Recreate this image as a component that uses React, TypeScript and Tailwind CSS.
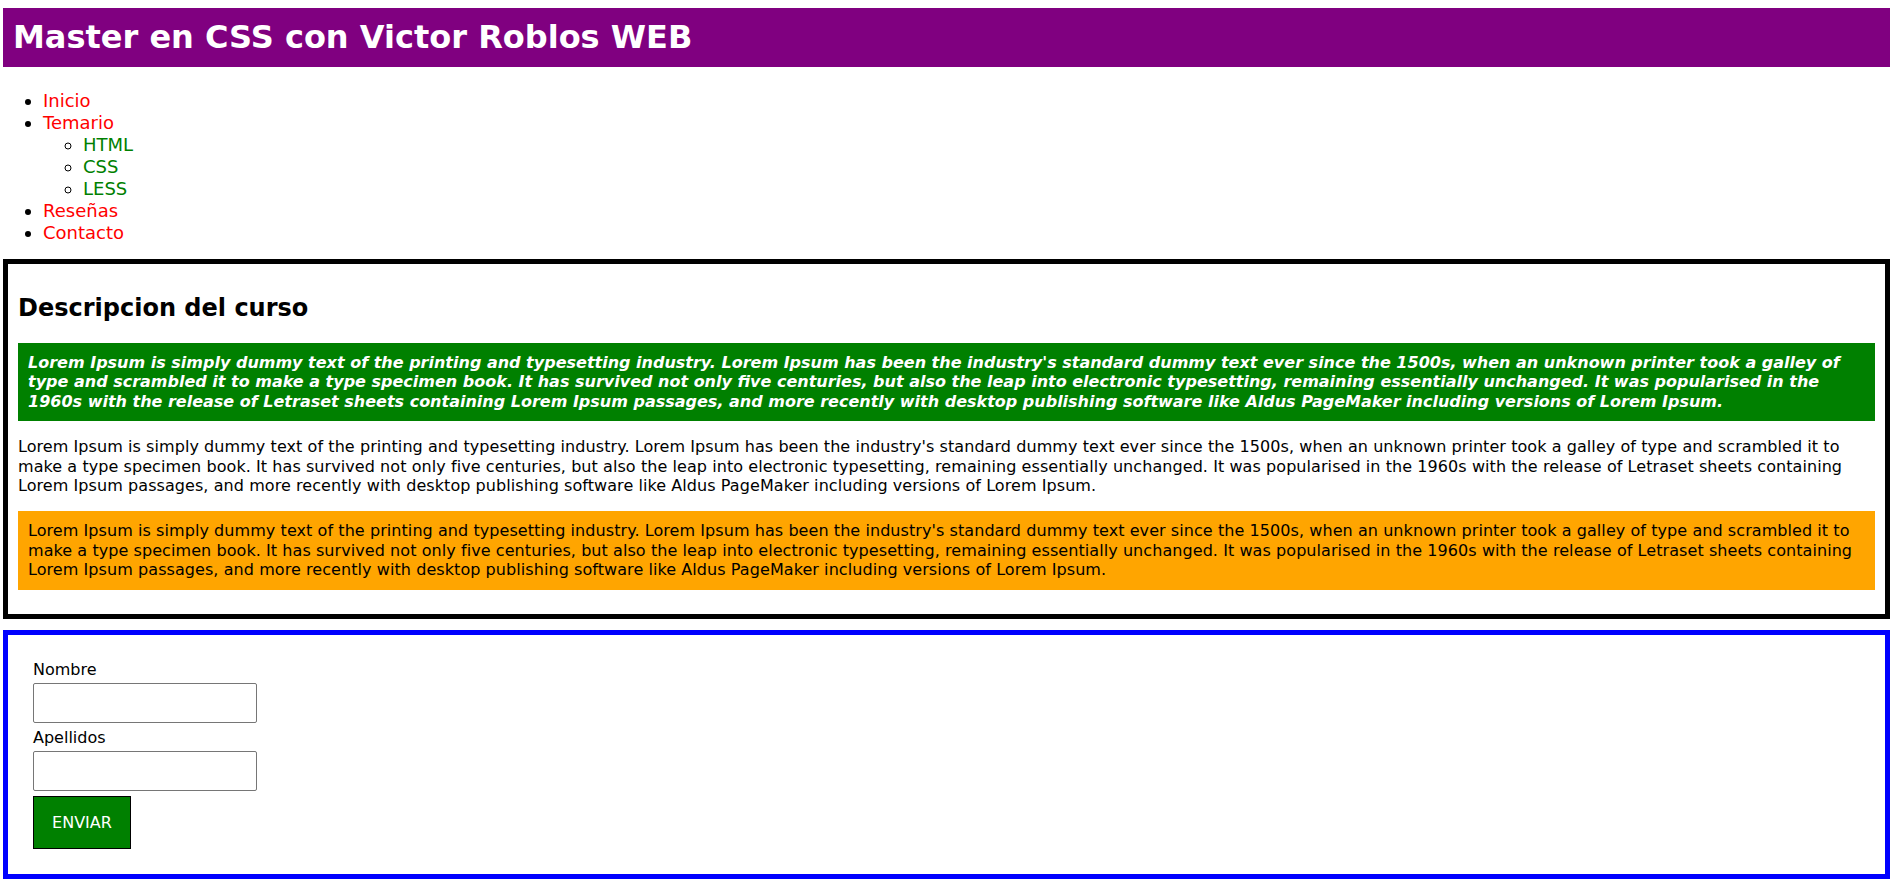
const green = [
  "Lorem Ipsum is simply dummy text of the printing and typesetting industry. Lorem Ipsum has been the industry's standard dummy text ever since the 1500s, when an unknown printer took a galley of",
  "type and scrambled it to make a type specimen book. It has survived not only five centuries, but also the leap into electronic typesetting, remaining essentially unchanged. It was popularised in the",
  "1960s with the release of Letraset sheets containing Lorem Ipsum passages, and more recently with desktop publishing software like Aldus PageMaker including versions of Lorem Ipsum.",
];

const plain = [
  "Lorem Ipsum is simply dummy text of the printing and typesetting industry. Lorem Ipsum has been the industry's standard dummy text ever since the 1500s, when an unknown printer took a galley of type and scrambled it to",
  "make a type specimen book. It has survived not only five centuries, but also the leap into electronic typesetting, remaining essentially unchanged. It was popularised in the 1960s with the release of Letraset sheets containing",
  "Lorem Ipsum passages, and more recently with desktop publishing software like Aldus PageMaker including versions of Lorem Ipsum.",
];

function Lines({ lines }: { lines: string[] }) {
  return (
    <>
      {lines.map((line) => (
        <span key={line} className="block whitespace-nowrap">
          {line}
        </span>
      ))}
    </>
  );
}

export default function App() {
  return (
    <div className="ml-[3px] w-[1887px] font-['DejaVu_Sans',sans-serif] text-[16px] leading-[19.4px] text-black">
      <header className="mt-[8px] bg-[#800080] px-[10px] py-[10px]">
        <h1 className="text-[32px] font-bold leading-[39px] text-white">Master en CSS con Victor Roblos WEB</h1>
      </header>

      <nav>
        <ul className="mt-[23px] mb-[15px] list-disc pl-[40px] text-[18px] leading-[22px]">
          <li>
            <span className="text-[#ff0000]">Inicio</span>
          </li>
          <li>
            <span className="text-[#ff0000]">Temario</span>
            <ul className="list-[circle] pl-[40px]">
              <li>
                <span className="text-[#008000]">HTML</span>
              </li>
              <li>
                <span className="text-[#008000]">CSS</span>
              </li>
              <li>
                <span className="text-[#008000]">LESS</span>
              </li>
            </ul>
          </li>
          <li>
            <span className="text-[#ff0000]">Reseñas</span>
          </li>
          <li>
            <span className="text-[#ff0000]">Contacto</span>
          </li>
        </ul>
      </nav>

      <section className="border-[5px] border-black px-[10px] pt-[30px] pb-[8px]">
        <h2 className="mb-[20px] text-[24px] font-bold leading-[29px]">Descripcion del curso</h2>
        <p className="mb-[16px] bg-[#008000] p-[10px] font-bold italic text-white">
          <Lines lines={green} />
        </p>
        <p className="mb-[16px] tracking-[0.07px]">
          <Lines lines={plain} />
        </p>
        <p className="mb-[16px] bg-[#ffa500] p-[10px] tracking-[0.07px]">
          <Lines lines={plain} />
        </p>
      </section>

      <section className="mt-[11px] border-[5px] border-[#0000ff] p-[25px]">
        <form className="flex flex-col items-start" onSubmit={(e) => e.preventDefault()}>
          <label className="mb-[4px] block">Nombre</label>
          <input type="text" className="mb-[5px] h-[40px] w-[224px] rounded-[2px] border border-[#767676]" />
          <label className="mb-[4px] block">Apellidos</label>
          <input type="text" className="mb-[5px] h-[40px] w-[224px] rounded-[2px] border border-[#767676]" />
          <button type="submit" className="h-[53px] w-[98px] border border-black bg-[#008000] text-white">
            ENVIAR
          </button>
        </form>
      </section>
    </div>
  );
}
